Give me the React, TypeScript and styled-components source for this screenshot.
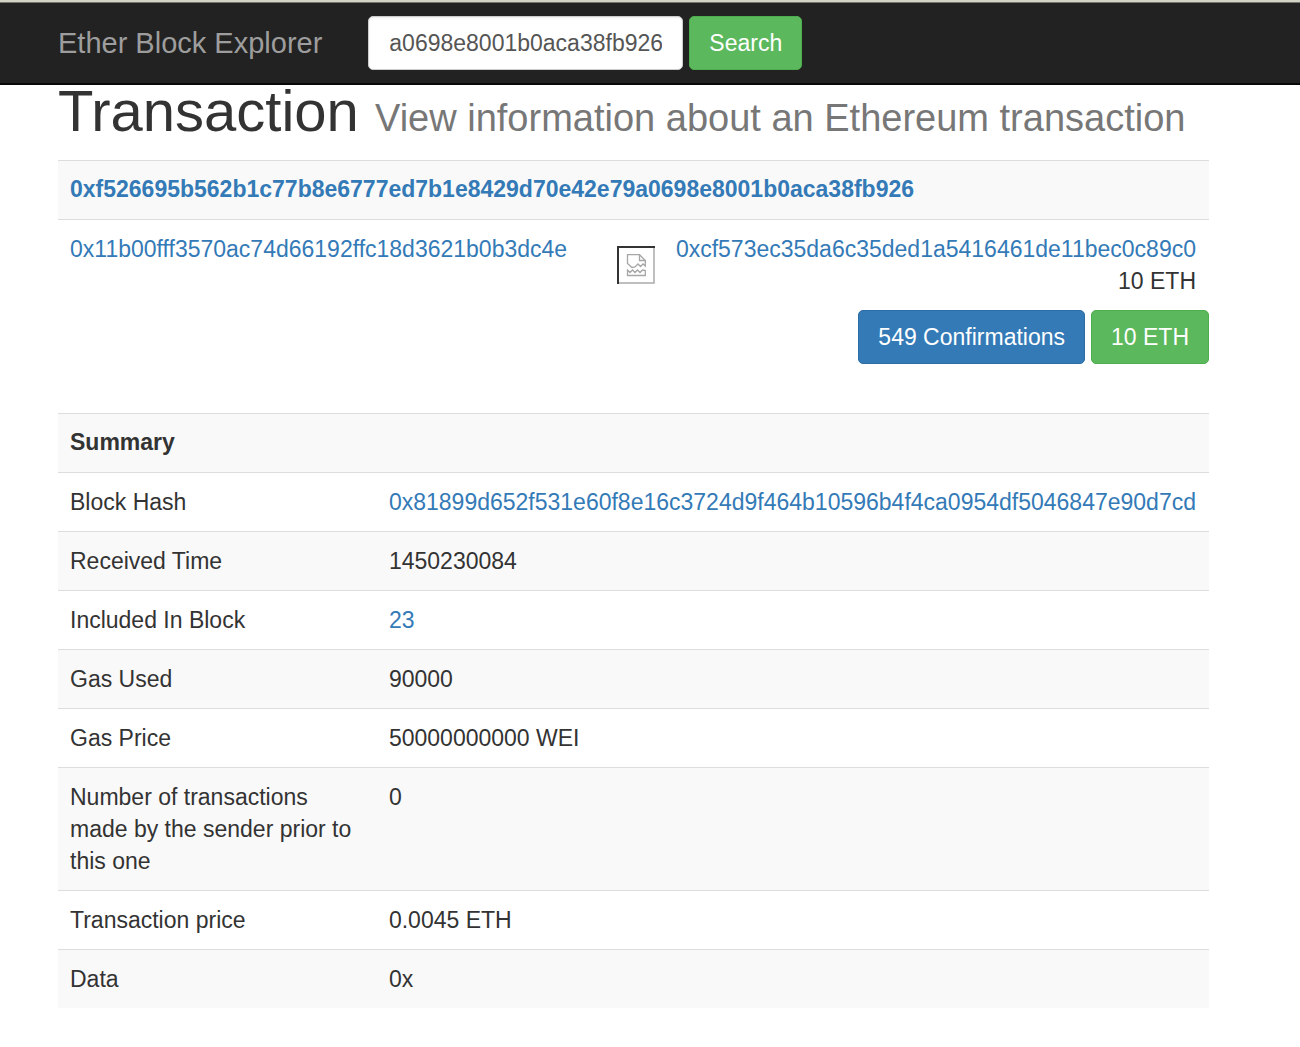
import React from "react";
import styled, { createGlobalStyle, css } from "styled-components";

const GlobalStyle = createGlobalStyle`
  *, *::before, *::after { box-sizing: border-box; }
  body {
    margin: 0;
    background: #fff;
    color: #333;
    font-family: "Liberation Sans", Arial, sans-serif;
    font-size: 23px;
    line-height: 32px;
  }
`;

const Navbar = styled.header`
  display: flex;
  align-items: center;
  gap: 46px;
  padding: 13px 58px;
  background: #222;
  border-top: 2px solid #d3d4c6;
  border-bottom: 2px solid #080808;
  box-shadow: inset 0 1px 0 #77766c;
`;

const Brand = styled.a`
  color: #9d9d9d;
  font-size: 29px;
  text-decoration: none;
  white-space: nowrap;
`;

const SearchForm = styled.form`
  display: flex;
  gap: 6px;
  padding-top: 1px;
`;

const SearchInput = styled.input`
  width: 315px;
  height: 54px;
  padding: 10px 20px;
  border: 1px solid #ccc;
  border-radius: 5px;
  background: #fff;
  box-shadow: inset 0 1px 2px rgba(0, 0, 0, 0.08);
  color: #555;
  font: inherit;
`;

const buttonTones = {
  primary: css`
    background: #337ab7;
    border-color: #2e6da4;
  `,
  success: css`
    background: #5cb85c;
    border-color: #4cae4c;
  `,
};

const Button = styled.button<{ $tone: keyof typeof buttonTones }>`
  height: 54px;
  padding: 0 19px;
  border: 1px solid;
  border-radius: 5px;
  color: #fff;
  font: inherit;
  white-space: nowrap;
  cursor: pointer;
  ${(p) => buttonTones[p.$tone]}
`;

const Page = styled.main`
  margin: 0 91px 38px 58px;
`;

const Title = styled.h1`
  margin: 0;
  padding-bottom: 16px;
  font-size: 58px;
  font-weight: 400;
  line-height: 52px;
  white-space: nowrap;
`;

const Subtitle = styled.small`
  color: #777;
  font-size: 38px;
`;

const Table = styled.table`
  width: 100%;
  border-collapse: collapse;

  th,
  td {
    padding: 13px 13px 13px 12px;
    border-top: 1px solid #ddd;
    text-align: left;
    vertical-align: top;
  }

  thead th {
    padding-top: 12px;
    padding-bottom: 14px;
    background: #f9f9f9;
  }

  tbody tr:nth-child(even) > * {
    background: #f9f9f9;
  }
`;

const SummaryTable = styled(Table)`
  th[scope="row"] {
    width: 320px;
    font-weight: 400;
  }
`;

const SenderCell = styled.td`
  width: 547px;
`;

const ArrowCell = styled.td`
  && {
    padding-left: 16px;
    padding-right: 9px;
  }
`;

const Link = styled.a`
  color: #337ab7;
  text-decoration: none;
`;

const Recipient = styled.div`
  text-align: right;
`;

const MissingImage = styled.svg`
  display: block;
  width: 38px;
  height: 38px;
  margin-top: 13px;
`;

const Actions = styled.div`
  display: flex;
  justify-content: flex-end;
  gap: 6px;
  margin-bottom: 49px;
`;

const HASH = "0xf526695b562b1c77b8e6777ed7b1e8429d70e42e79a0698e8001b0aca38fb926";

const rows: { label: string; value: string; link?: boolean }[] = [
  {
    label: "Block Hash",
    value: "0x81899d652f531e60f8e16c3724d9f464b10596b4f4ca0954df5046847e90d7cd",
    link: true,
  },
  { label: "Received Time", value: "1450230084" },
  { label: "Included In Block", value: "23", link: true },
  { label: "Gas Used", value: "90000" },
  { label: "Gas Price", value: "50000000000 WEI" },
  { label: "Number of transactions made by the sender prior to this one", value: "0" },
  { label: "Transaction price", value: "0.0045 ETH" },
  { label: "Data", value: "0x" },
];

export default function App() {
  return (
    <>
      <GlobalStyle />
      <Navbar>
        <Brand href="#">Ether Block Explorer</Brand>
        <SearchForm onSubmit={(e) => e.preventDefault()}>
          <SearchInput aria-label="Search" defaultValue="a0698e8001b0aca38fb926" />
          <Button $tone="success" type="submit">Search</Button>
        </SearchForm>
      </Navbar>
      <Page>
        <Title>
          Transaction <Subtitle>View information about an Ethereum transaction</Subtitle>
        </Title>
        <Table>
          <thead>
            <tr>
              <th colSpan={3}>
                <Link href="#">{HASH}</Link>
              </th>
            </tr>
          </thead>
          <tbody>
            <tr>
              <SenderCell>
                <Link href="#">0x11b00fff3570ac74d66192ffc18d3621b0b3dc4e</Link>
              </SenderCell>
              <ArrowCell>
                <MissingImage viewBox="0 0 38 38" fill="none" role="img" aria-label="Sent to">
                  <path d="M1 37H37V1" stroke="#aaa" strokeWidth="1.5" />
                  <path d="M1 38V1H38" stroke="#333" strokeWidth="2" />
                  <g stroke="#a6a6a6" strokeWidth="1.3">
                    <path d="M10.5 17.5V8.7H22.5L28.3 14.5V20L26 18L23.5 20.5L21 18L18 21L15 21.5L10.5 17.5Z" />
                    <path d="M22.5 8.7V14.5H28.3" />
                    <path d="M10.5 29.5V24L13 26.5L15.5 24L18 26.5L20.5 24L23 26.5L25.5 24L28.3 24.5V29.5Z" />
                  </g>
                </MissingImage>
              </ArrowCell>
              <td>
                <Recipient>
                  <Link href="#">0xcf573ec35da6c35ded1a5416461de11bec0c89c0</Link>
                  <div>10 ETH</div>
                </Recipient>
              </td>
            </tr>
          </tbody>
        </Table>
        <Actions>
          <Button $tone="primary" type="button">549 Confirmations</Button>
          <Button $tone="success" type="button">10 ETH</Button>
        </Actions>
        <SummaryTable>
          <thead>
            <tr>
              <th colSpan={2}>Summary</th>
            </tr>
          </thead>
          <tbody>
            {rows.map((row) => (
              <tr key={row.label}>
                <th scope="row">{row.label}</th>
                <td>{row.link ? <Link href="#">{row.value}</Link> : row.value}</td>
              </tr>
            ))}
          </tbody>
        </SummaryTable>
      </Page>
    </>
  );
}
